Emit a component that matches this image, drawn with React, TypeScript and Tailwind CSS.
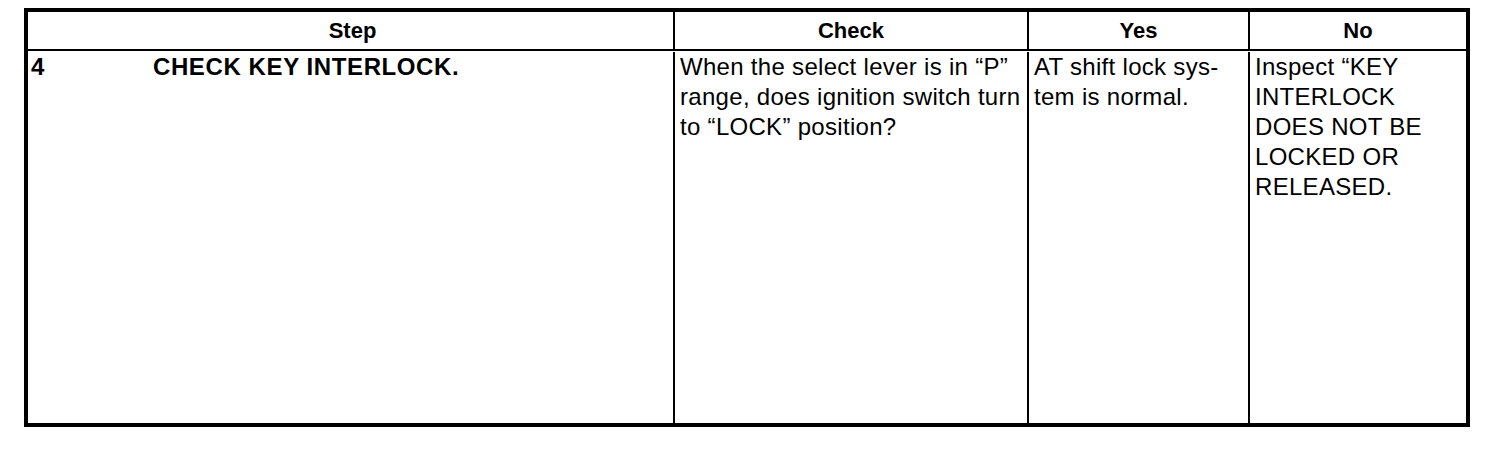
export default function App() {
  return (
    <div className="min-h-screen bg-white pt-[8px] pl-[24px] text-black font-['Liberation_Sans',Arial,sans-serif]">
      <div className="w-[1446px] h-[419px] border-4 border-black flex flex-col">
        {/* header row */}
        <div className="grid grid-cols-[645px_354px_221px_218px] h-[39px] border-b-2 border-black font-bold text-[22px] leading-[37px]">
          <div className="text-center pl-[4px]">Step</div>
          <div className="border-l-2 border-black text-center">Check</div>
          <div className="border-l-2 border-black text-center">Yes</div>
          <div className="border-l-2 border-black text-center">No</div>
        </div>

        {/* step row */}
        <div className="grid grid-cols-[645px_354px_221px_218px] flex-1 text-[24px] leading-[30px] tracking-[0.3px] pt-[1px]">
          <div className="flex pl-[3px] font-bold">
            <span className="w-[122px]">4</span>
            <span className="tracking-[0.6px]">CHECK KEY INTERLOCK.</span>
          </div>
          <div className="border-l-2 border-black pl-[5px] pr-[2px]">
            When the select lever is in “P” range, does ignition switch turn to “LOCK” position?
          </div>
          <div className="border-l-2 border-black pl-[5px]">
            AT shift lock sys-
            <br />
            tem is normal.
          </div>
          <div className="border-l-2 border-black pl-[5px]">
            Inspect “KEY
            <br />
            INTERLOCK
            <br />
            DOES NOT BE
            <br />
            LOCKED OR
            <br />
            RELEASED.
          </div>
        </div>
      </div>
    </div>
  );
}
